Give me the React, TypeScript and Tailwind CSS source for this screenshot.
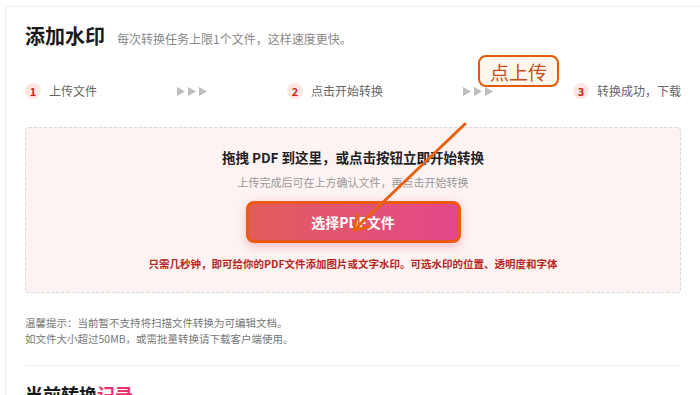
import React from 'react'

const font = { fontFamily: '"Noto Sans CJK SC", "Noto Sans", sans-serif' }

function StepNum({ n }: { n: number }) {
  return (
    <span className="flex h-4 w-4 items-center justify-center rounded-full bg-[#fbe6e2] text-[11px] font-bold leading-none text-[#c8281e]">
      {n}
    </span>
  )
}

function Arrows() {
  return (
    <div className="flex w-[30px] items-center gap-[3px]">
      {[0, 1, 2].map((i) => (
        <svg key={i} width="8" height="9" viewBox="0 0 8 9">
          <path d="M0 0 L8 4.5 L0 9 Z" fill="#bdbdbd" />
        </svg>
      ))}
    </div>
  )
}

function Step({ n, label }: { n: number; label: string }) {
  return (
    <div className="flex items-center gap-2">
      <StepNum n={n} />
      <span className="text-[12px] leading-4 text-[#666]">{label}</span>
    </div>
  )
}

export default function App() {
  return (
    <div className="relative h-[395px] w-[700px] overflow-hidden bg-white" style={font}>
      <div className="ml-[5px] mt-[6px] rounded-tl-[4px] border-l border-t border-[#ececec] pl-[19px] pr-[14px]">
        <div className="flex items-baseline pt-[14px]">
          <h1 className="text-[20px] font-bold leading-[30px] text-[#1a1a1a]">添加水印</h1>
          <span className="ml-[12px] text-[12px] text-[#888]">每次转换任务上限1个文件，这样速度更快。</span>
        </div>

        <div className="mt-[32px] flex w-[656px] items-center justify-between">
          <Step n={1} label="上传文件" />
          <Arrows />
          <Step n={2} label="点击开始转换" />
          <Arrows />
          <Step n={3} label="转换成功，下载" />
        </div>

        <div className="mt-[28px] flex h-[166px] w-[656px] flex-col items-center rounded-[4px] border border-dashed border-[#d9d9d9] bg-[#fcf3f2]">
          <p className="mt-[19px] text-[13.5px] font-bold leading-5 text-[#222]">拖拽 PDF 到这里，或点击按钮立即开始转换</p>
          <p className="mt-[7px] text-[11px] leading-4 text-[#999]">上传完成后可在上方确认文件，再点击开始转换</p>
          <button className="mt-[11px] flex h-[42px] w-[215px] items-center justify-center rounded-[8px] border-[3px] border-[#ea5a10] bg-gradient-to-r from-[#e25c5a] to-[#e4478a] text-[14px] font-bold text-white shadow-[0_3px_10px_rgba(230,80,100,0.35)]">
            选择PDF文件
          </button>
          <p className="mt-[13px] text-[10.5px] font-bold leading-4 text-[#b8281f]">只需几秒钟，即可给你的PDF文件添加图片或文字水印。可选水印的位置、透明度和字体</p>
        </div>

        <div className="mt-[22px] text-[10.5px] leading-[16px] text-[#777]">
          <p>温馨提示：当前暂不支持将扫描文件转换为可编辑文档。</p>
          <p>如文件大小超过50MB，或需批量转换请下载客户端使用。</p>
        </div>

        <div className="mt-[18px] h-px w-[656px] bg-[#eeeeee]" />

        <h2 className="mt-[16px] text-[18px] font-bold leading-6 text-[#1a1a1a]">
          当前转换<span className="text-[#e8336d]">记录</span>
        </h2>
      </div>

      <div className="absolute left-[478px] top-[55px] flex h-[32px] w-[81px] items-center justify-center rounded-[8px] border-2 border-[#e35a0c] bg-[#fff6ee] text-[19px] leading-none text-[#c4501a]">
        点上传
      </div>

      <svg className="pointer-events-none absolute left-0 top-0" width="700" height="395">
        <line x1="465" y1="124" x2="356" y2="228" stroke="#ea6210" strokeWidth="3" strokeLinecap="round" />
        <path d="M354 230 L357 215 M354 230 L369 227" stroke="#ea6210" strokeWidth="3" strokeLinecap="round" fill="none" />
      </svg>
    </div>
  )
}
